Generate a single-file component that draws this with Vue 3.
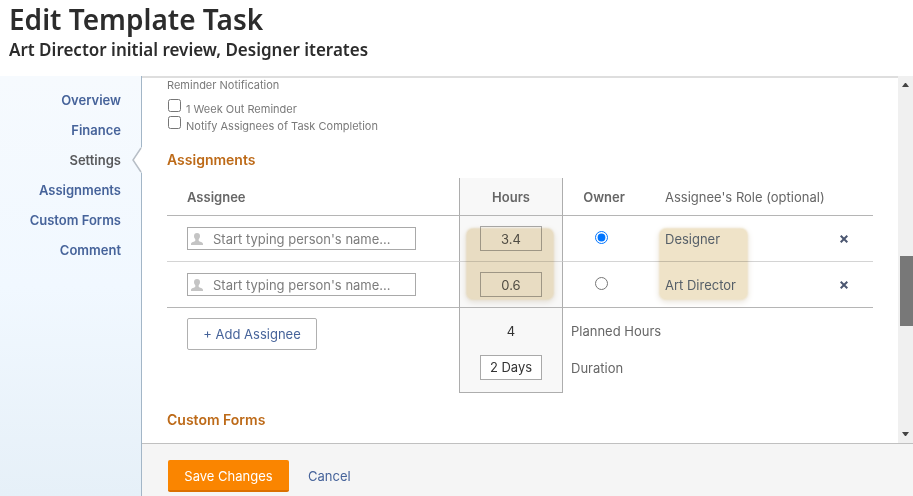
<script setup>
import { ref } from 'vue'

const sections = ['Overview', 'Finance', 'Settings', 'Assignments', 'Custom Forms', 'Comment']
const current = 'Settings'

const assignments = ref([
  { id: 1, hours: '3.4', role: 'Designer' },
  { id: 2, hours: '0.6', role: 'Art Director' },
])
const owner = ref(1)
const duration = ref('2 Days')
</script>

<template>
  <div class="page">
    <header class="page-header">
      <h1>Edit Template Task</h1>
      <p>Art Director initial review, Designer iterates</p>
    </header>

    <div class="body">
      <nav class="sidebar">
        <a
          v-for="name in sections"
          :key="name"
          href="#"
          :class="{ current: name === current }"
        >
          {{ name }}
          <svg v-if="name === current" class="notch" viewBox="0 0 10 26" aria-hidden="true">
            <path d="M10 0L9 1L1 13L9 25L10 26Z" fill="#fff" />
            <path d="M9 1L1 13L9 25" fill="none" stroke="#b7bec6" stroke-width="1.5" />
          </svg>
        </a>
      </nav>

      <div class="main">
        <div class="viewport">
          <main class="content">
            <fieldset class="reminders">
              <legend>Reminder Notification</legend>
              <label><input type="checkbox" /><span>1 Week Out Reminder</span></label>
              <label><input type="checkbox" /><span>Notify Assignees of Task Completion</span></label>
            </fieldset>

            <h2>Assignments</h2>
            <div class="table-wrap">
              <table>
                <colgroup>
                  <col class="col-assignee" />
                  <col class="col-hours" />
                  <col class="col-owner" />
                  <col />
                  <col class="col-remove" />
                </colgroup>
                <thead>
                  <tr>
                    <th class="assignee">Assignee</th>
                    <th class="hours">Hours</th>
                    <th class="owner">Owner</th>
                    <th class="role">Assignee's Role (optional)</th>
                    <th></th>
                  </tr>
                </thead>
                <tbody>
                  <tr v-for="row in assignments" :key="row.id">
                    <td class="assignee">
                      <div class="person">
                        <svg viewBox="0 0 12 12" aria-hidden="true">
                          <path
                            d="M6 0C4 0 3 1.3 3 3.1C3 4.6 3.6 5.6 4.3 6.3V7.8C3.8 8.9 0 8.8 0 11V12H12V11C12 8.8 8.2 8.9 7.7 7.8V6.3C8.4 5.6 9 4.6 9 3.1C9 1.3 8 0 6 0Z"
                            fill="#c4c4c4"
                          />
                        </svg>
                        <input type="text" placeholder="Start typing person's name..." aria-label="Assignee" />
                      </div>
                    </td>
                    <td class="hours"><input v-model="row.hours" type="text" class="num" aria-label="Hours" /></td>
                    <td class="owner">
                      <input v-model="owner" type="radio" name="owner" :value="row.id" aria-label="Owner" />
                    </td>
                    <td class="role"><a href="#">{{ row.role }}</a></td>
                    <td class="remove">
                      <button type="button" aria-label="Remove">
                        <svg viewBox="0 0 8 8" aria-hidden="true">
                          <path d="M0.7 0.7L7.3 7.3M7.3 0.7L0.7 7.3" stroke="#4b5670" stroke-width="2" />
                        </svg>
                      </button>
                    </td>
                  </tr>
                </tbody>
                <tfoot>
                  <tr class="planned">
                    <td class="assignee" rowspan="2"><button type="button" class="add">+ Add Assignee</button></td>
                    <td class="hours">4</td>
                    <td class="caption" colspan="3">Planned Hours</td>
                  </tr>
                  <tr class="duration">
                    <td class="hours"><input id="duration" v-model="duration" type="text" class="num" /></td>
                    <td class="caption" colspan="3"><label for="duration">Duration</label></td>
                  </tr>
                </tfoot>
              </table>
              <div class="highlight on-hours"></div>
              <div class="highlight on-role"></div>
            </div>

            <h2>Custom Forms</h2>
          </main>

          <div class="scrollbar" aria-hidden="true">
            <svg viewBox="0 0 7 4"><path d="M0 4L3 0H4L7 4Z" fill="#444" /></svg>
            <div class="track"><div class="thumb"></div></div>
            <svg viewBox="0 0 7 4"><path d="M0 0L3 4H4L7 0Z" fill="#444" /></svg>
          </div>
        </div>

        <footer class="actions">
          <button type="button" class="save">Save Changes</button>
          <a href="#">Cancel</a>
        </footer>
      </div>
    </div>
  </div>
</template>

<style>
body {
  margin: 0;
}
</style>

<style scoped>
* {
  box-sizing: border-box;
}

.page {
  display: flex;
  flex-direction: column;
  min-height: 100vh;
  background: #fff;
  color: #666;
  font: 13px/20px Inter, "Open Sans", sans-serif;
}

a {
  color: #46639a;
  text-decoration: none;
}

button,
input {
  font: inherit;
}

.page-header {
  height: 76px;
  padding: 0 9px;
  color: #2c2c2c;
  font-family: "Noto Sans", sans-serif;
}

h1 {
  margin: 0;
  font-size: 28px;
  line-height: 38px;
  font-weight: 600;
}

.page-header p {
  margin: 0;
  font-size: 17px;
  line-height: 24px;
  font-weight: 600;
}

.body {
  display: flex;
  flex: 1;
}

.sidebar {
  display: flex;
  flex-direction: column;
  flex: none;
  gap: 10px;
  width: 142px;
  padding: 14px 20px 0 0;
  border-right: 1px solid #a3b6c7;
  background: linear-gradient(#f6fafe, #f1f8ff 50%, #e6f0f8);
  text-align: right;
}

.sidebar a {
  position: relative;
  font-weight: 600;
}

.sidebar .current {
  color: #58595b;
}

.notch {
  position: absolute;
  top: -3px;
  right: -21px;
  width: 10px;
  height: 26px;
}

.main {
  display: flex;
  flex: 1;
  flex-direction: column;
  min-width: 0;
}

.viewport {
  display: flex;
  flex: 1;
}

.content {
  flex: 1;
  min-width: 0;
  padding: 0 25px;
  border-top: 2px solid #dedede;
}

.reminders {
  margin: 0;
  padding: 0;
  border: 0;
  color: #7a7a7a;
  font-size: 11px;
  line-height: 17px;
}

.reminders legend {
  margin-bottom: 5px;
  padding: 0;
  line-height: 15px;
}

.reminders label {
  display: flex;
  gap: 4px;
  height: 17px;
}

.reminders input {
  width: 13px;
  height: 13px;
  margin: 1px;
}

.reminders span {
  padding-top: 3px;
}

h2 {
  margin: 0;
  color: #bd6a18;
  font-size: 14px;
  line-height: 20px;
  font-weight: 600;
}

.reminders + h2 {
  margin-top: 18px;
}

.table-wrap {
  position: relative;
  margin: 8px 0 17px;
}

table {
  width: 100%;
  border-collapse: separate;
  border-spacing: 0;
  table-layout: fixed;
}

.col-assignee {
  width: 292px;
}

.col-hours {
  width: 104px;
}

.col-owner {
  width: 82px;
}

.col-remove {
  width: 58px;
}

th,
td {
  padding: 0;
  text-align: left;
}

th {
  height: 38px;
  border-bottom: 1px solid #b5b5b5;
  font-weight: 600;
  white-space: nowrap;
}

tbody td {
  height: 46px;
  border-bottom: 1px solid #d4d4d4;
}

tbody tr:last-child td {
  border-bottom-color: #b5b5b5;
}

.assignee {
  padding-left: 20px;
}

.hours {
  border-right: 1px solid #adadad;
  border-left: 1px solid #adadad;
  background: #f8f8f8;
  text-align: center;
}

.owner {
  text-align: center;
}

td.owner {
  padding: 0 5px 2px 0;
}

td.owner input {
  display: block;
  width: 13px;
  height: 13px;
  margin: 0 auto;
}

.role {
  padding-left: 20px;
}

th.role {
  font-weight: 400;
}

.person {
  display: flex;
  align-items: center;
  gap: 10px;
  width: 229px;
  height: 23px;
  padding: 0 3px;
  border: 1px solid #a9a9a9;
}

.person svg {
  flex: none;
  width: 12px;
  height: 12px;
}

.person input {
  flex: 1;
  min-width: 0;
  padding: 0;
  border: 0;
  background: none;
}

.person input::placeholder {
  color: #7c7c7c;
}

.num {
  display: block;
  width: 62px;
  height: 25px;
  margin: 0 auto;
  padding: 0;
  border: 1px solid #a9a9a9;
  background: #fff;
  color: #333;
  text-align: center;
}

tbody .num {
  background: transparent;
  color: #555;
}

.remove {
  text-align: center;
}

.remove button {
  display: block;
  margin: 0 auto;
  padding: 6px;
  border: 0;
  background: none;
}

.remove svg {
  display: block;
  width: 8px;
  height: 8px;
}

.planned td {
  height: 46px;
}

.duration td {
  height: 39px;
  padding-bottom: 12px;
}

tfoot .hours {
  color: #333;
}

tfoot .duration .hours {
  border-bottom: 1px solid #adadad;
}

tfoot .caption {
  padding-left: 8px;
}

tfoot .assignee {
  padding-top: 10px;
  vertical-align: top;
}

.add {
  width: 130px;
  height: 32px;
  padding: 0;
  border: 1px solid #b0b0b0;
  border-radius: 2px;
  background: #fff;
  color: #46639a;
}

.role a {
  color: #5c6b85;
}

.highlight {
  position: absolute;
  top: 51px;
  height: 70px;
  border-radius: 6px;
  background: #efe3c8;
  box-shadow: 0 0 2px 1px #efe3c8, 0 2px 6px 1px #e8e3da;
  mix-blend-mode: multiply;
  pointer-events: none;
}

.on-hours {
  left: 300px;
  width: 86px;
}

.on-role {
  left: 493px;
  width: 87px;
}

.scrollbar {
  display: flex;
  flex-direction: column;
  align-items: center;
  flex: none;
  width: 15px;
  padding: 7px 0;
  background: #f0f0f0;
}

.scrollbar svg {
  width: 7px;
  height: 4px;
}

.track {
  display: flex;
  flex: 1;
  align-self: stretch;
  flex-direction: column;
  padding: 0 0 0 2px;
}

.track::before {
  content: "";
  flex: 169;
}

.track::after {
  content: "";
  flex: 106;
}

.thumb {
  flex: 69;
  background: #787878;
}

.actions {
  display: flex;
  align-items: center;
  gap: 19px;
  height: 53px;
  padding: 12px 26px 0;
  border-top: 1px solid #c0c0c0;
  background: #f5f5f5;
}

.save {
  width: 121px;
  height: 32px;
  padding: 2px 0 0;
  border: 0;
  border-bottom: 2px solid #db7000;
  border-radius: 2px;
  background: #fa8500;
  color: #fff;
}
</style>
